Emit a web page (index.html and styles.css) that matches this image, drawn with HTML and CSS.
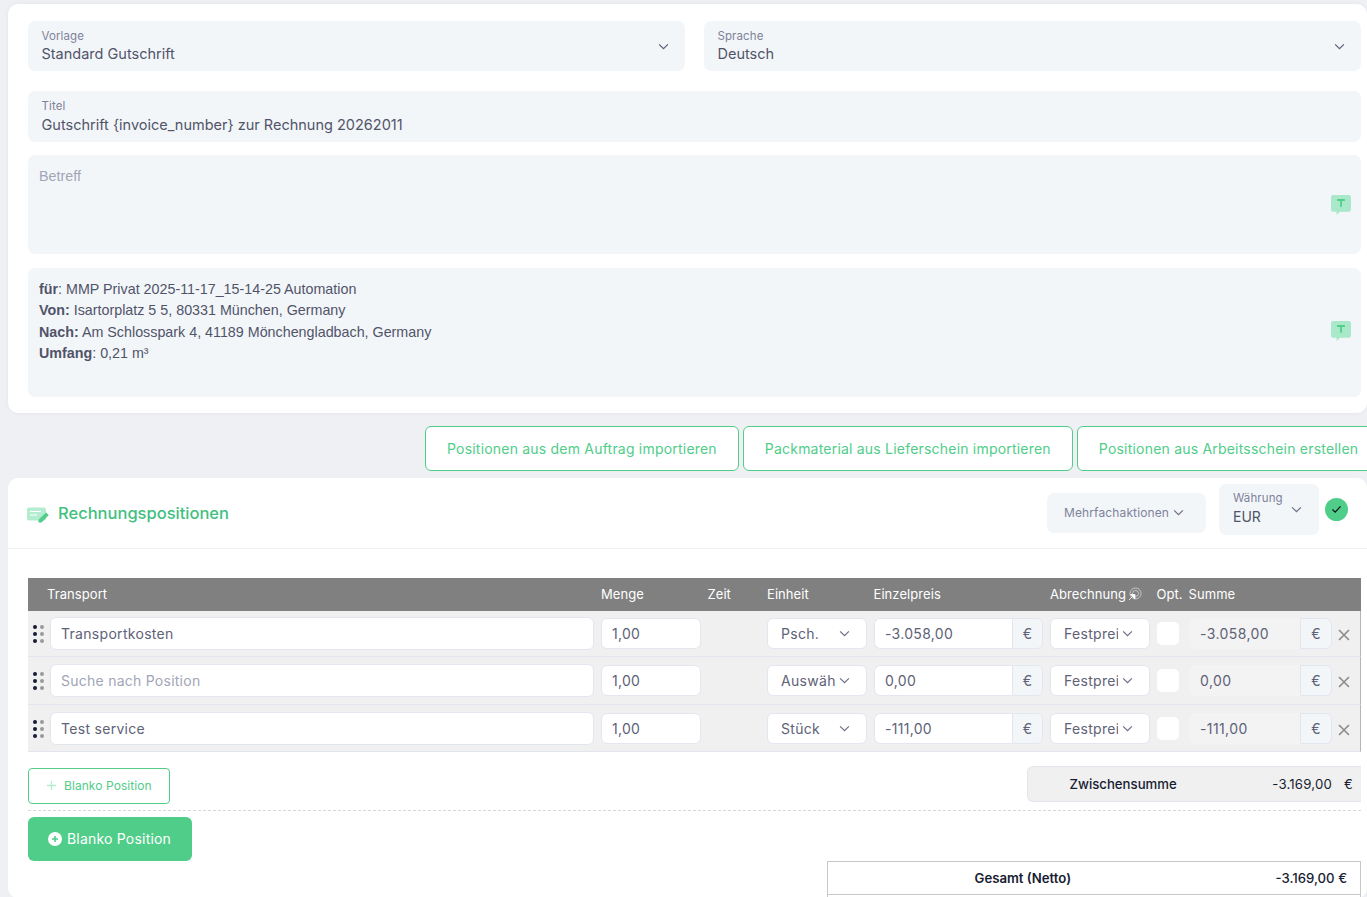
FILE: index.html
```html
<!DOCTYPE html>
<html>
	<head>
		<meta charset="utf-8">
		<title>Gutschrift</title>
		<link rel="stylesheet" href="styles.css">
	</head>
	<body>
		<!-- Kopfdaten -->
		<section class="card head-card">
			<div class="field-row">
				<div class="field field-select">
					<div>
						<div class="field-label">Vorlage</div>
						<div class="field-value">Standard Gutschrift</div>
					</div>
					<svg class="chevron-big" viewBox="0 0 12 8"><path d="M1 1.5l5 5 5-5"/></svg>
				</div>
				<div class="field field-select">
					<div>
						<div class="field-label">Sprache</div>
						<div class="field-value">Deutsch</div>
					</div>
					<svg class="chevron-big" viewBox="0 0 12 8"><path d="M1 1.5l5 5 5-5"/></svg>
				</div>
			</div>
			<div class="field field-title">
				<div class="field-label">Titel</div>
				<div class="field-value">Gutschrift {invoice_number} zur Rechnung 20262011</div>
			</div>
			<div class="editor editor-subject">
				<div class="editor-placeholder">Betreff</div>
				<svg class="editor-icon" viewBox="1 1 18 18"><path class="bubble" d="M3 1h14a2 2 0 0 1 2 2v11a2 2 0 0 1-2 2h-8l-3 3v-3H3a2 2 0 0 1-2-2V3a2 2 0 0 1 2-2z"/><path class="letter" d="M6.5 5.5h7M10 5.5v6"/></svg>
			</div>
			<div class="editor editor-body">
				<p><b>für</b>: MMP Privat 2025-11-17_15-14-25 Automation</p>
				<p><b>Von:</b> Isartorplatz 5 5, 80331 München, Germany</p>
				<p><b>Nach:</b> Am Schlosspark 4, 41189 Mönchengladbach, Germany</p>
				<p><b>Umfang</b>: 0,21 m³</p>
				<svg class="editor-icon" viewBox="1 1 18 18"><path class="bubble" d="M3 1h14a2 2 0 0 1 2 2v11a2 2 0 0 1-2 2h-8l-3 3v-3H3a2 2 0 0 1-2-2V3a2 2 0 0 1 2-2z"/><path class="letter" d="M6.5 5.5h7M10 5.5v6"/></svg>
			</div>
		</section>

		<!-- Import Buttons -->
		<div class="import-row">
			<button class="btn-import">Positionen aus dem Auftrag importieren</button>
			<button class="btn-import">Packmaterial aus Lieferschein importieren</button>
			<button class="btn-import">Positionen aus Arbeitsschein erstellen</button>
		</div>

		<!-- Rechnungspositionen -->
		<section class="card items-card">
			<header class="items-head">
				<svg class="items-icon" viewBox="0 0 22 16"><rect class="note" x="0" y="0.500" width="19" height="13" rx="2"/><path class="note-line" d="M3 4.500h11M3 8h7"/><path class="pen" d="M19 5.500l2.800 2.500-7.300 7.500h-3v-2.800z"/></svg>
				<h2 class="items-title">Rechnungspositionen</h2>
				<button class="bulk-btn">Mehrfachaktionen <svg class="chevron" viewBox="0 0 12 8"><path d="M1 1.5l5 5 5-5"/></svg></button>
				<div class="currency">
					<div>
						<div class="field-label">Währung</div>
						<div class="currency-value">EUR</div>
					</div>
					<svg class="chevron" viewBox="0 0 12 8"><path d="M1 1.5l5 5 5-5"/></svg>
				</div>
				<span class="check-dot"><svg viewBox="0 0 12 10"><path d="M1.5 5l3 3 6-6.5"/></svg></span>
			</header>

			<div class="items-body">
				<div class="grid-row table-head">
					<span class="th-name">Transport</span>
					<span>Menge</span>
					<span>Zeit</span>
					<span>Einheit</span>
					<span>Einzelpreis</span>
					<span class="th-billing">Abrechnung<svg viewBox="0 0 14 14"><circle cx="7.5" cy="6.5" r="5.5"/><circle cx="7.5" cy="6.5" r="3"/><path class="cursor" d="M1 13l4-4M2.5 7.5h4.500v4.500z"/></svg></span>
					<span>Opt.</span>
					<span class="th-sum">Summe</span>
				</div>

				<div class="grid-row item-row row-first">
					<svg class="drag" viewBox="0 0 11 18"><circle cx="2" cy="2" r="2"/><circle cx="2" cy="9" r="2"/><circle cx="2" cy="16" r="2"/><circle class="dot-light" cx="9" cy="2" r="2"/><circle class="dot-light" cx="9" cy="9" r="2"/><circle class="dot-light" cx="9" cy="16" r="2"/></svg>
					<div class="input input-tall">Transportkosten</div>
					<div class="input">1,00</div>
					<div></div>
					<div class="input select"><span class="select-text">Psch.</span><svg class="chevron" viewBox="0 0 12 8"><path d="M1 1.5l5 5 5-5"/></svg></div>
					<div class="input-group"><div class="input">-3.058,00</div><span class="addon">€</span></div>
					<div class="input select"><span class="select-text">Festpreis</span><svg class="chevron" viewBox="0 0 12 8"><path d="M1 1.5l5 5 5-5"/></svg></div>
					<div class="opt-box"></div>
					<div class="sum-group"><div class="sum-value">-3.058,00</div><span class="addon">€</span></div>
					<svg class="remove" viewBox="0 0 12 12"><path d="M1 1l10 10M11 1L1 11"/></svg>
				</div>

				<div class="grid-row item-row">
					<svg class="drag" viewBox="0 0 11 18"><circle cx="2" cy="2" r="2"/><circle cx="2" cy="9" r="2"/><circle cx="2" cy="16" r="2"/><circle class="dot-light" cx="9" cy="2" r="2"/><circle class="dot-light" cx="9" cy="9" r="2"/><circle class="dot-light" cx="9" cy="16" r="2"/></svg>
					<div class="input input-tall placeholder">Suche nach Position</div>
					<div class="input">1,00</div>
					<div></div>
					<div class="input select"><span class="select-text">Auswählen</span><svg class="chevron" viewBox="0 0 12 8"><path d="M1 1.5l5 5 5-5"/></svg></div>
					<div class="input-group"><div class="input">0,00</div><span class="addon">€</span></div>
					<div class="input select"><span class="select-text">Festpreis</span><svg class="chevron" viewBox="0 0 12 8"><path d="M1 1.5l5 5 5-5"/></svg></div>
					<div class="opt-box"></div>
					<div class="sum-group"><div class="sum-value">0,00</div><span class="addon">€</span></div>
					<svg class="remove" viewBox="0 0 12 12"><path d="M1 1l10 10M11 1L1 11"/></svg>
				</div>

				<div class="grid-row item-row row-last">
					<svg class="drag" viewBox="0 0 11 18"><circle cx="2" cy="2" r="2"/><circle cx="2" cy="9" r="2"/><circle cx="2" cy="16" r="2"/><circle class="dot-light" cx="9" cy="2" r="2"/><circle class="dot-light" cx="9" cy="9" r="2"/><circle class="dot-light" cx="9" cy="16" r="2"/></svg>
					<div class="input input-tall">Test service</div>
					<div class="input">1,00</div>
					<div></div>
					<div class="input select"><span class="select-text">Stück</span><svg class="chevron" viewBox="0 0 12 8"><path d="M1 1.5l5 5 5-5"/></svg></div>
					<div class="input-group"><div class="input">-111,00</div><span class="addon">€</span></div>
					<div class="input select"><span class="select-text">Festpreis</span><svg class="chevron" viewBox="0 0 12 8"><path d="M1 1.5l5 5 5-5"/></svg></div>
					<div class="opt-box"></div>
					<div class="sum-group"><div class="sum-value">-111,00</div><span class="addon">€</span></div>
					<svg class="remove" viewBox="0 0 12 12"><path d="M1 1l10 10M11 1L1 11"/></svg>
				</div>

				<div class="subtotal-row">
					<button class="btn-blank-outline"><svg viewBox="0 0 12 12"><path d="M6 1v10M1 6h10"/></svg>Blanko Position</button>
					<div class="subtotal">
						<span class="subtotal-label">Zwischensumme</span>
						<span class="subtotal-value">-3.169,00</span>
						<span class="subtotal-cur">€</span>
					</div>
				</div>
				<div class="dashed"></div>
				<button class="btn-blank"><svg viewBox="0 0 14 14"><circle cx="7" cy="7" r="7"/><path d="M7 4v6M4 7h6"/></svg>Blanko Position</button>

				<div class="totals">
					<div class="totals-row">
						<span class="totals-label">Gesamt (Netto)</span>
						<span class="totals-value">-3.169,00 €</span>
					</div>
				</div>
			</div>
		</section>
	</body>
</html>
```

FILE: styles.css
```css
* {
	margin: 0;
	padding: 0;
	box-sizing: border-box;
}

html, body {
	height: 897px;
	overflow: hidden;
}

body {
	font-family: Inter, "Liberation Sans", sans-serif;
	background-color: #eff0f4;
	color: #5e6278;
	padding: 4px 0 0 8px;
	width: 1367px;
}

button {
	font-family: inherit;
	cursor: pointer;
}

svg {
	display: block;
	flex: none;
}

.card {
	background-color: #fff;
	border-radius: 10px;
	width: 1359px;
}

/* Kopfdaten */
.head-card {
	height: 409px;
	padding: 17px 6px 0 20px;
	box-shadow: 0 0 4px rgba(0,0,0,0.05);
}

.field-row {
	display: flex;
	gap: 19px;
	margin-bottom: 20px;
}

.field {
	background-color: #f3f6f9;
	border-radius: 7px;
	padding: 8px 14px 8px 13.500px;
}

.field-select {
	flex: 1;
	height: 50px;
	display: flex;
	align-items: center;
	justify-content: space-between;
	padding-right: 16.500px;
}

.field-title {
	height: 51px;
	padding-top: 8px;
	margin-bottom: 13px;
}

.field-label {
	font-size: 11.5px;
	line-height: 14px;
	color: #7e8299;
	letter-spacing: 0.1px;
}

.field-select .field-label {
	margin-top: 1px;
}

.field-value {
	font-size: 14.500px;
	line-height: 22px;
	margin-top: 1px;
	color: #505469;
}

.field-select .field-value {
	margin-top: 0;
}

.chevron-big {
	width: 11px;
	height: 7px;
	fill: none;
	stroke: #5e6278;
	stroke-width: 1.4;
}

.chevron {
	width: 11px;
	height: 7px;
	fill: none;
	stroke: #6d7186;
	stroke-width: 1.4;
}

.editor {
	position: relative;
	background-color: #f3f6f9;
	border-radius: 7px;
	padding: 11px 11px;
	font-family: "Liberation Sans", Arial, sans-serif;
	font-size: 14.300px;
	line-height: 21.300px;
	color: #505469;
}

.editor-subject {
	height: 99px;
	margin-bottom: 14px;
}

.editor-body {
	height: 129px;
}

.editor-body .editor-icon {
	margin-top: -2px;
}

.editor-placeholder {
	color: #a1a5b7;
}

.editor-icon {
	position: absolute;
	right: 10px;
	top: 50%;
	width: 20px;
	height: 20px;
	transform: translateY(-50%);
}

.bubble {
	fill: #a9e8c8;
}

.letter {
	fill: none;
	stroke: #4fcf8a;
	stroke-width: 1.6;
}

/* Import Buttons */
.import-row {
	display: flex;
	gap: 4px;
	margin: 13px 0 7px 417px;
	width: 1000px;
}

.btn-import {
	flex: none;
	height: 45px;
	padding: 0 21px;
	background-color: #fff;
	border: 1px solid #50cd89;
	border-radius: 6px;
	color: #50cd89;
	font-size: 14px;
	letter-spacing: 0.205px;
}

/* Rechnungspositionen */
.items-card {
	height: 420px;
}

.items-head {
	display: flex;
	align-items: center;
	height: 71px;
	padding: 0 19px 0 19px;
	border-bottom: 1px solid #eff2f5;
}

.items-icon {
	width: 22px;
	height: 16px;
	margin: 3px 9px 0 0;
}

.note {
	fill: #b4ecd0;
}

.note-line {
	stroke: #fff;
	stroke-width: 1.200;
}

.pen {
	fill: #50cd89;
}

.items-title {
	flex: 1;
	font-size: 16.500px;
	font-weight: 450;
	color: #41c080;
}

.bulk-btn {
	display: flex;
	align-items: center;
	gap: 4px;
	width: 159px;
	height: 40px;
	padding-left: 17px;
	margin-top: -1px;
	border: 0;
	border-radius: 7px;
	background-color: #f3f6f9;
	color: #7e8299;
	font-size: 12px;
	letter-spacing: 0.12px;
}

.currency {
	display: flex;
	align-items: flex-start;
	justify-content: space-between;
	width: 100px;
	height: 51px;
	margin: -7px 0 0 13px;
	padding: 7px 17px 0 14px;
	border-radius: 7px;
	background-color: #f3f6f9;
}

.currency .chevron {
	margin-top: 15px;
}

.currency-value {
	font-size: 14px;
	line-height: 20px;
	margin-top: 2px;
	color: #505469;
}

.check-dot {
	display: flex;
	align-items: center;
	justify-content: center;
	width: 23px;
	height: 23px;
	margin: -8px 0 0 6px;
	border-radius: 50%;
	background-color: #50cd89;
}

.check-dot svg {
	width: 11px;
	height: 9px;
	fill: none;
	stroke: #10131f;
	stroke-width: 1.4;
}

.items-body {
	padding: 29px 0 0 20px;
}

.grid-row {
	display: grid;
	grid-template-columns: 15px 544px 100px 52px 100px 169px 100px 22px 146px 21px;
	column-gap: 7px;
	align-items: center;
	width: 1333px;
}

.table-head {
	height: 33px;
	padding-bottom: 1px;
	background-color: #808080;
	color: #fff;
	font-size: 13px;
	letter-spacing: 0.07px;
	grid-template-columns: 566.500px 100px 53px 100px 170px 100px 25.500px 146px;
	column-gap: 6.500px;
}

.th-name {
	padding-left: 19px;
}

.th-billing {
	display: flex;
	align-items: center;
	gap: 2px;
}

.th-billing svg {
	width: 14px;
	height: 14px;
	fill: none;
	stroke: #c9c9c9;
	stroke-width: 1;
}

.th-billing .cursor {
	fill: #fff;
	stroke: #fff;
	stroke-width: 0.8;
}

.item-row {
	padding: 8px 0;
	background-color: #f0f0f0;
	border-bottom: 1px solid #e2e5f0;
	border-right: 1px solid #b5b5b5;
	font-size: 14px;
	letter-spacing: 0.3px;
}

.row-first {
	padding: 7px 0;
}

.row-last {
	padding: 8px 0 7px;
}

.drag {
	width: 11px;
	height: 18px;
	margin: 0 0 0 5px;
	fill: #181c32;
}

.dot-light {
	fill: #9a9a9a;
}

.input {
	height: 31px;
	line-height: 29px;
	padding: 0 10px;
	background-color: #fff;
	border: 1px solid #e4e6ef;
	border-radius: 6px;
	color: #5e6278;
}

.input-tall {
	height: 33px;
	line-height: 31px;
	margin: -1px 0;
}

.placeholder {
	color: #a1a5b7;
	letter-spacing: 0.25px;
}

.select {
	display: flex;
	align-items: center;
	justify-content: space-between;
	padding: 0 16px 0 13px;
}

.select-text {
	width: 54px;
	overflow: hidden;
	white-space: nowrap;
}

.input-group, .sum-group {
	display: flex;
	height: 31px;
}

.input-group .input {
	flex: 1;
	border-radius: 6px 0 0 6px;
	border-right: 0;
}

.addon {
	width: 32px;
	height: 31px;
	line-height: 29px;
	text-align: center;
	background-color: #f3f6f9;
	border: 1px solid #e4e6ef;
	border-radius: 0 6px 6px 0;
}

.input-group .addon {
	width: 31px;
}

.opt-box {
	width: 22px;
	height: 23px;
	border-radius: 5px;
	background-color: #fff;
}

.sum-group {
	padding-left: 4px;
}

.sum-value {
	flex: 1;
	line-height: 31px;
	padding-left: 10px;
	letter-spacing: 0.4px;
	background-color: #f3f3f3;
	border-radius: 6px 0 0 6px;
}

.remove {
	width: 12px;
	height: 12px;
	margin: 2px 0 0 -1px;
	fill: none;
	stroke: #8b8b8b;
	stroke-width: 1.6;
}

/* Summen */
.subtotal-row {
	display: flex;
	justify-content: space-between;
	align-items: flex-start;
	width: 1333px;
	margin-top: 14px;
}

.btn-blank-outline {
	display: flex;
	align-items: center;
	gap: 7px;
	width: 142px;
	height: 36px;
	margin-top: 2px;
	padding: 0 0 1px 17px;
	background-color: #fff;
	border: 1px solid #50cd89;
	border-radius: 4px;
	color: #50cd89;
	font-size: 12px;
	letter-spacing: 0.07px;
}

.btn-blank-outline svg {
	width: 11px;
	height: 11px;
	fill: none;
	stroke: #b4ecd0;
	stroke-width: 1.4;
}

.subtotal {
	display: flex;
	align-items: center;
	width: 334px;
	height: 36px;
	padding-left: 41.500px;
	background-color: #f0f0f0;
	border: 1px solid #e4e6ef;
	border-right: 0;
	border-radius: 6px 0 0 6px;
	font-size: 13.200px;
	color: #181c32;
}

.subtotal-label {
	flex: 1;
	font-weight: 500;
}

.subtotal-value {
	letter-spacing: 0.2px;
}

.subtotal-cur {
	width: 17px;
	margin-left: 12px;
}

.dashed {
	width: 1333px;
	margin-top: 6px;
	border-top: 1px dashed #d8d8d8;
}

.btn-blank {
	display: flex;
	align-items: center;
	gap: 5px;
	width: 164px;
	height: 44px;
	margin-top: 6px;
	padding: 0 0 2px 20px;
	background-color: #50cd89;
	border: 0;
	border-radius: 6px;
	color: #fff;
	font-size: 14px;
	letter-spacing: 0.2px;
}

.btn-blank svg {
	width: 14px;
	height: 14px;
	margin-top: 2px;
	fill: #fff;
}

.btn-blank svg path {
	stroke: #50cd89;
	stroke-width: 1.6;
}

.totals {
	width: 534px;
	height: 60px;
	margin-left: 799px;
	border: 1px solid #c8c8c8;
	background-color: #fff;
}

.totals-row {
	display: flex;
	align-items: center;
	height: 33px;
	padding: 0 13px 1px 0;
	border-bottom: 1px solid #c8c8c8;
	font-size: 13.200px;
	font-weight: 600;
	color: #181c32;
}

.totals-label {
	flex: 1;
	padding-left: 146.500px;
}

.totals-value {
	font-weight: 500;
}
```
